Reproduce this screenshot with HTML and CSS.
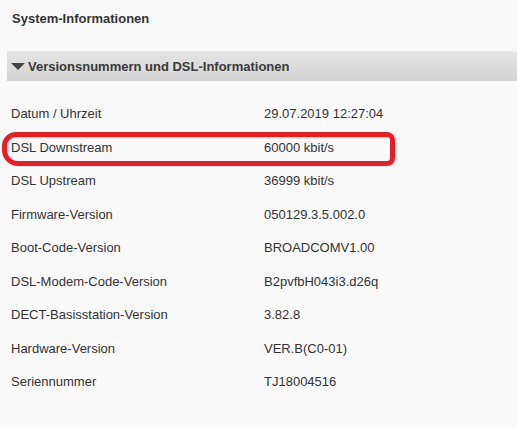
FILE: index.html
```html
<!DOCTYPE html>
<html lang="de">
<head>
<meta charset="utf-8">
<link rel="stylesheet" href="styles.css">
</head>
<body>
<div class="page">
  <h1 class="title">System-Informationen</h1>
  <div class="bar">
    <span class="caret"></span>
    <span class="bar-title">Versionsnummern und DSL-Informationen</span>
  </div>
  <div class="list">
    <div class="row"><span class="label">Datum / Uhrzeit</span><span class="value">29.07.2019 12:27:04</span></div>
    <div class="row row-marked"><span class="label">DSL Downstream</span><span class="value">60000 kbit/s</span></div>
    <div class="row"><span class="label">DSL Upstream</span><span class="value">36999 kbit/s</span></div>
    <div class="row"><span class="label">Firmware-Version</span><span class="value">050129.3.5.002.0</span></div>
    <div class="row"><span class="label">Boot-Code-Version</span><span class="value">BROADCOMV1.00</span></div>
    <div class="row"><span class="label">DSL-Modem-Code-Version</span><span class="value">B2pvfbH043i3.d26q</span></div>
    <div class="row"><span class="label">DECT-Basisstation-Version</span><span class="value">3.82.8</span></div>
    <div class="row"><span class="label">Hardware-Version</span><span class="value">VER.B(C0-01)</span></div>
    <div class="row"><span class="label">Seriennummer</span><span class="value">TJ18004516</span></div>
  </div>
</div>
</body>
</html>
```
FILE: styles.css
```css
html, body {
  margin: 0;
  padding: 0;
  background: #fafafa;
}
body {
  font-family: "Liberation Sans", Arial, sans-serif;
  font-size: 13px;
  color: #333;
}
.page {
  width: 517px;
  height: 427px;
  overflow: hidden;
}
.title {
  margin: 0 0 13px 0;
  padding-left: 12px;
  font-size: 13px;
  font-weight: bold;
  line-height: 38px;
  color: #333;
}
.bar {
  margin-left: 7px;
  height: 30px;
  display: flex;
  align-items: center;
  gap: 3px;
  padding-left: 4px;
  background: linear-gradient(#e5e5e5, #d3d3d3);
  border-top-right-radius: 4px;
}
.caret {
  width: 0;
  height: 0;
  border-left: 7px solid transparent;
  border-right: 7px solid transparent;
  border-top: 7px solid #444;
  margin-top: 1px;
}
.bar-title {
  font-weight: bold;
  color: #3a3a3a;
}
.list {
  margin-top: 16px;
}
.row {
  position: relative;
  height: 33.5px;
  display: grid;
  grid-template-columns: 253px 1fr;
  align-items: center;
  padding-left: 11px;
}
.row-marked::after {
  content: "";
  position: absolute;
  left: 2px;
  top: 1px;
  width: 383px;
  height: 24px;
  border: 5px solid #ec1c24;
  border-radius: 14px 8px 8px 16px;
}
```
